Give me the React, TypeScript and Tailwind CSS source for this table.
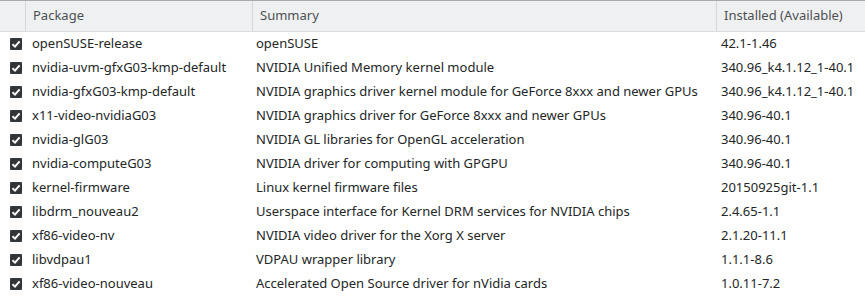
const rows: [string, string, string][] = [
  ["openSUSE-release", "openSUSE", "42.1-1.46"],
  ["nvidia-uvm-gfxG03-kmp-default", "NVIDIA Unified Memory kernel module", "340.96_k4.1.12_1-40.1"],
  ["nvidia-gfxG03-kmp-default", "NVIDIA graphics driver kernel module for GeForce 8xxx and newer GPUs", "340.96_k4.1.12_1-40.1"],
  ["x11-video-nvidiaG03", "NVIDIA graphics driver for GeForce 8xxx and newer GPUs", "340.96-40.1"],
  ["nvidia-glG03", "NVIDIA GL libraries for OpenGL acceleration", "340.96-40.1"],
  ["nvidia-computeG03", "NVIDIA driver for computing with GPGPU", "340.96-40.1"],
  ["kernel-firmware", "Linux kernel firmware files", "20150925git-1.1"],
  ["libdrm_nouveau2", "Userspace interface for Kernel DRM services for NVIDIA chips", "2.4.65-1.1"],
  ["xf86-video-nv", "NVIDIA video driver for the Xorg X server", "2.1.20-11.1"],
  ["libvdpau1", "VDPAU wrapper library", "1.1.1-8.6"],
  ["xf86-video-nouveau", "Accelerated Open Source driver for nVidia cards", "1.0.11-7.2"],
];

function Check() {
  return (
    <svg width="12" height="12" viewBox="0 0 12 12">
      <rect width="12" height="12" rx="1" fill="#31363b" />
      <path d="M2.5 6.2 L5 8.6 L9.6 3.4" stroke="#fff" strokeWidth="2" fill="none" />
    </svg>
  );
}

export default function App() {
  return (
    <div className="h-[299px] w-[865px] overflow-hidden bg-white font-['Noto_Sans',sans-serif] text-[13px] text-[#232627]">
      <div className="flex h-[32px] border-t border-b border-t-[#a8abae] border-b-[#dcdddd] bg-[#eff0f1] text-[#4d5052]">
        <div className="w-[26px] border-r border-[#d5d6d7]" />
        <div className="flex w-[227px] items-center border-r border-[#d5d6d7] pl-[7px]">Package</div>
        <div className="flex w-[464px] items-center border-r border-[#d5d6d7] pl-[7px]">Summary</div>
        <div className="flex flex-1 items-center pl-[7px]">Installed (Available)</div>
      </div>
      {rows.map(([pkg, summary, ver]) => (
        <div key={pkg} className="flex h-[24px] items-center whitespace-nowrap">
          <div className="flex w-[32px] items-center pl-[10px]">
            <Check />
          </div>
          <div className="w-[224px]">{pkg}</div>
          <div className="w-[465px]">{summary}</div>
          <div className="flex-1">{ver}</div>
        </div>
      ))}
    </div>
  );
}
